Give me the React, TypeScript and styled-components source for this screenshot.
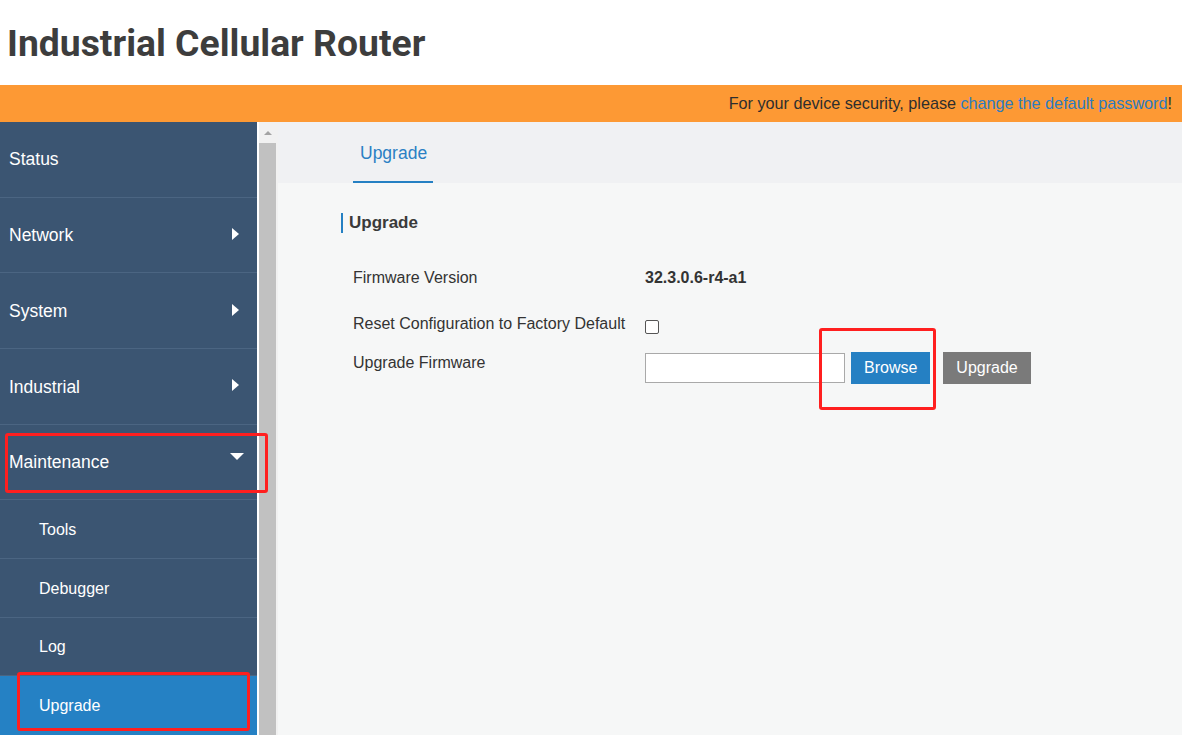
import React from 'react';
import styled, {createGlobalStyle} from 'styled-components';

const GlobalStyle = createGlobalStyle`
  html, body {
    margin: 0;
    padding: 0;
    background: #ffffff;
    font-family: 'Liberation Sans', Arial, sans-serif;
    overflow: hidden;
  }
`;

const MENU = [
  {label: 'Status', arrow: 'none'},
  {label: 'Network', arrow: 'right'},
  {label: 'System', arrow: 'right'},
  {label: 'Industrial', arrow: 'right'},
  {label: 'Maintenance', arrow: 'down'},
];

const SUB_MENU = ['Tools', 'Debugger', 'Log', 'Upgrade'];

const App = () => {
  return (
    <Page>
      <GlobalStyle />
      <Header>
        <h1>Industrial Cellular Router</h1>
      </Header>
      <Banner>
        For your device security, please <a href="#">change the default password</a>!
      </Banner>

      <Body>
        <Sidebar>
          {MENU.map((item) => (
            <MenuItem key={item.label}>
              <span>{item.label}</span>
              {item.arrow === 'right' && <ArrowRight />}
              {item.arrow === 'down' && <ArrowDown />}
            </MenuItem>
          ))}
          {SUB_MENU.map((item) => (
            <SubItem key={item} $active={item === 'Upgrade'}>
              {item}
            </SubItem>
          ))}
        </Sidebar>

        <ScrollTrack>
          <div className="scroll-btn">
            <span />
          </div>
          <div className="scroll-thumb" />
        </ScrollTrack>

        <Content>
          <TabBar>
            <Tab>Upgrade</Tab>
          </TabBar>
          <Panel>
            <SectionTitle>Upgrade</SectionTitle>
            <FormRow $top={36}>
              <Label>Firmware Version</Label>
              <Value>32.3.0.6-r4-a1</Value>
            </FormRow>
            <FormRow $top={28}>
              <Label>Reset Configuration to Factory Default</Label>
              <Checkbox />
            </FormRow>
            <FormRow $top={18}>
              <Label $offset={2}>Upgrade Firmware</Label>
              <FileInput />
              <Button $color="#2580c3">Browse</Button>
              <Button $color="#7a7a7a" $gap={13}>
                Upgrade
              </Button>
            </FormRow>
          </Panel>
        </Content>
      </Body>

      <Highlight style={{left: 5, top: 433, width: 263, height: 60}} />
      <Highlight style={{left: 17, top: 672, width: 233, height: 59}} />
      <Highlight style={{left: 819, top: 328, width: 117, height: 82}} />
    </Page>
  );
};

export default App;

const Page = styled.div`
  position: relative;
  width: 1182px;
  height: 735px;
  overflow: hidden;
`;

const Header = styled.div`
  height: 85px;
  display: flex;
  align-items: center;
  padding-left: 7px;

  h1 {
    margin: 0;
    padding-top: 1px;
    font-family: Roboto, 'Liberation Sans', sans-serif;
    font-weight: 700;
    font-size: 37.3px;
    color: #3d3d3d;
  }
`;

const Banner = styled.div`
  height: 37px;
  background-color: #fd9934;
  display: flex;
  align-items: center;
  justify-content: flex-end;
  padding-right: 10px;
  font-size: 16.2px;
  color: #2e2e2e;
  white-space: pre;

  a {
    color: #2d7cc0;
    text-decoration: none;
  }
`;

const Body = styled.div`
  display: flex;
  height: 613px;
`;

const Sidebar = styled.div`
  width: 257px;
  flex-shrink: 0;
  background-color: #3b5572;
  margin-right: 2px;
  display: flex;
  flex-direction: column;
`;

const MenuItem = styled.div`
  height: 76px;
  box-sizing: border-box;
  border-bottom: 1px solid #4b6582;
  display: flex;
  align-items: center;
  justify-content: space-between;
  padding: 2px 18px 0 9px;
  font-size: 17.5px;
  color: #ffffff;

  &:first-child {
    padding-top: 0;
  }

  &:last-child {
    padding-top: 3px;
  }
`;

const ArrowRight = styled.span`
  width: 0;
  height: 0;
  border-top: 6px solid transparent;
  border-bottom: 6px solid transparent;
  border-left: 7px solid #ffffff;
  margin-top: -4px;
`;

const ArrowDown = styled.span`
  width: 0;
  height: 0;
  border-left: 7px solid transparent;
  border-right: 7px solid transparent;
  border-top: 7px solid #ffffff;
  margin-right: -5px;
  margin-top: -13px;
`;

const SubItem = styled.div<{$active?: boolean}>`
  height: 59px;
  box-sizing: border-box;
  padding-top: 2px;
  border-bottom: 1px solid ${(p) => (p.$active ? '#2581c4' : '#4b6582')};
  display: flex;
  align-items: center;
  padding-left: 39px;
  font-size: 16px;
  color: #ffffff;
  background-color: ${(p) => (p.$active ? '#2581c4' : 'transparent')};
`;

const ScrollTrack = styled.div`
  width: 17px;
  flex-shrink: 0;
  display: flex;
  flex-direction: column;
  background-color: #f1f1f1;

  .scroll-btn {
    height: 21px;
    display: flex;
    justify-content: center;
    padding-top: 9px;
    box-sizing: border-box;

    span {
      width: 0;
      height: 0;
      border-left: 4px solid transparent;
      border-right: 4px solid transparent;
      border-bottom: 4px solid #a3a3a3;
    }
  }

  .scroll-thumb {
    flex: 1;
    background-color: #c1c1c1;
  }
`;

const Content = styled.div`
  flex: 1;
  display: flex;
  flex-direction: column;
  background-color: #f6f7f7;
  border-left: 2px solid #f1f1f1;
`;

const TabBar = styled.div`
  height: 61px;
  background-color: #f0f1f3;
  display: flex;
  padding-left: 75px;
`;

const Tab = styled.div`
  height: 61px;
  box-sizing: border-box;
  padding: 3px 6px 0 7px;
  display: flex;
  align-items: center;
  font-size: 17.5px;
  color: #2a80c4;
  border-bottom: 2px solid #2580c3;
`;

const Panel = styled.div`
  padding: 30px 0 0 63px;
  display: flex;
  flex-direction: column;
`;

const SectionTitle = styled.div`
  border-left: 2px solid #2580c3;
  padding-left: 6px;
  height: 20px;
  line-height: 20px;
  font-size: 17px;
  font-weight: 700;
  color: #3a3a3a;
`;

const FormRow = styled.div<{$top: number}>`
  display: flex;
  align-items: center;
  margin-top: ${(p) => p.$top}px;
  padding-left: 12px;
`;

const Label = styled.div<{$offset?: number}>`
  width: 292px;
  font-size: 16px;
  color: #333333;
  align-self: flex-start;
  margin-top: ${(p) => p.$offset ?? 0}px;
`;

const Value = styled.div`
  font-size: 16px;
  font-weight: 700;
  color: #333333;
`;

const Checkbox = styled.span`
  width: 12px;
  height: 12px;
  border: 1px solid #555555;
  border-radius: 2px;
  background: #ffffff;
  margin-top: 5px;
`;

const FileInput = styled.div`
  width: 198px;
  height: 28px;
  border: 1px solid #a9a9a9;
  background: #ffffff;
`;

const Button = styled.div<{$color: string; $gap?: number}>`
  height: 32px;
  padding: 0 13px;
  margin-left: ${(p) => p.$gap ?? 6}px;
  display: flex;
  align-items: center;
  background-color: ${(p) => p.$color};
  color: #ffffff;
  font-size: 16px;
`;

const Highlight = styled.div`
  position: absolute;
  border: 3px solid #ff1f1f;
  border-radius: 3px;
  box-sizing: border-box;
  pointer-events: none;
`;
